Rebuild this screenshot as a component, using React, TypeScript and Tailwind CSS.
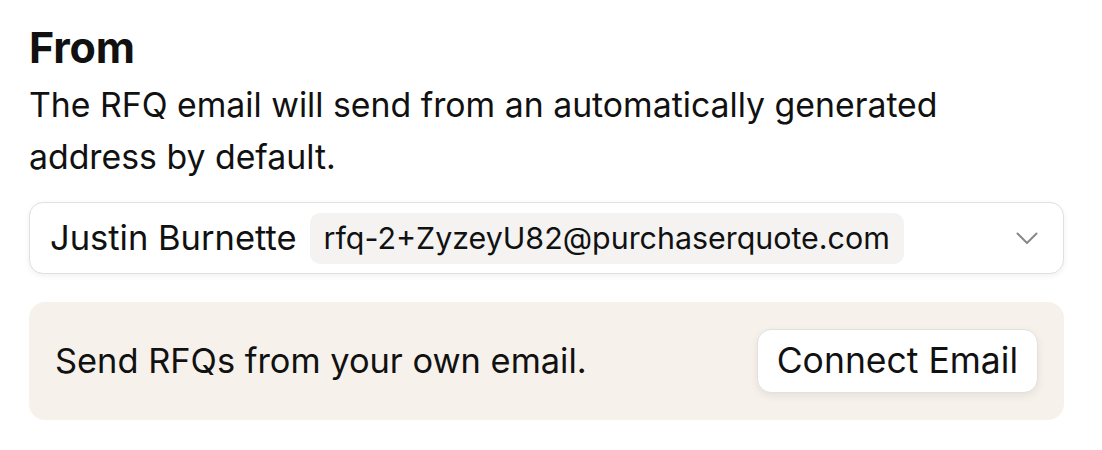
import React from 'react';

function Chevron() {
  return (
    <svg width="22" height="13" viewBox="0 0 22 13" fill="none" className="shrink-0">
      <path d="M1.5 1.5L11 11L20.5 1.5" stroke="#8c8782" strokeWidth="2" strokeLinecap="round" strokeLinejoin="round" />
    </svg>
  );
}

export default function App() {
  return (
    <div
      className="h-[450px] w-full bg-white pl-[29px] pr-[38px] pt-[23px] text-[#111111]"
      style={{ fontFamily: 'Inter, "Noto Sans", sans-serif' }}
    >
      <h2 className="text-[43px] font-bold leading-[48px] tracking-[-0.2px]">From</h2>
      <p className="mt-[8px] max-w-[960px] text-[33.8px] leading-[52px]">
        The RFQ email will send from an automatically generated address by default.
      </p>

      <div className="mt-[19px] flex h-[72px] items-center rounded-[14px] border border-[#e2dfdc] bg-white pl-[20px] pr-[25px] shadow-[0_2px_6px_rgba(0,0,0,0.06)]">
        <span className="text-[34.5px] leading-none">Justin Burnette</span>
        <span className="ml-[13px] flex h-[51px] items-center rounded-[10px] bg-[#f4f3f1] px-[14px] text-[30.4px] leading-none">
          rfq-2+ZyzeyU82@purchaserquote.com
        </span>
        <div className="flex-1" />
        <Chevron />
      </div>

      <div className="mt-[28px] flex h-[118px] items-center justify-between rounded-[16px] bg-[#f6f2eb] pl-[26px] pr-[26px]">
        <span className="text-[34.4px] leading-none">Send RFQs from your own email.</span>
        <button className="flex h-[64px] items-center rounded-[14px] border border-[#e4e0db] bg-white px-[19px] text-[35.5px] font-normal leading-none shadow-[0_3px_8px_rgba(0,0,0,0.07)]">
          Connect Email
        </button>
      </div>
    </div>
  );
}
